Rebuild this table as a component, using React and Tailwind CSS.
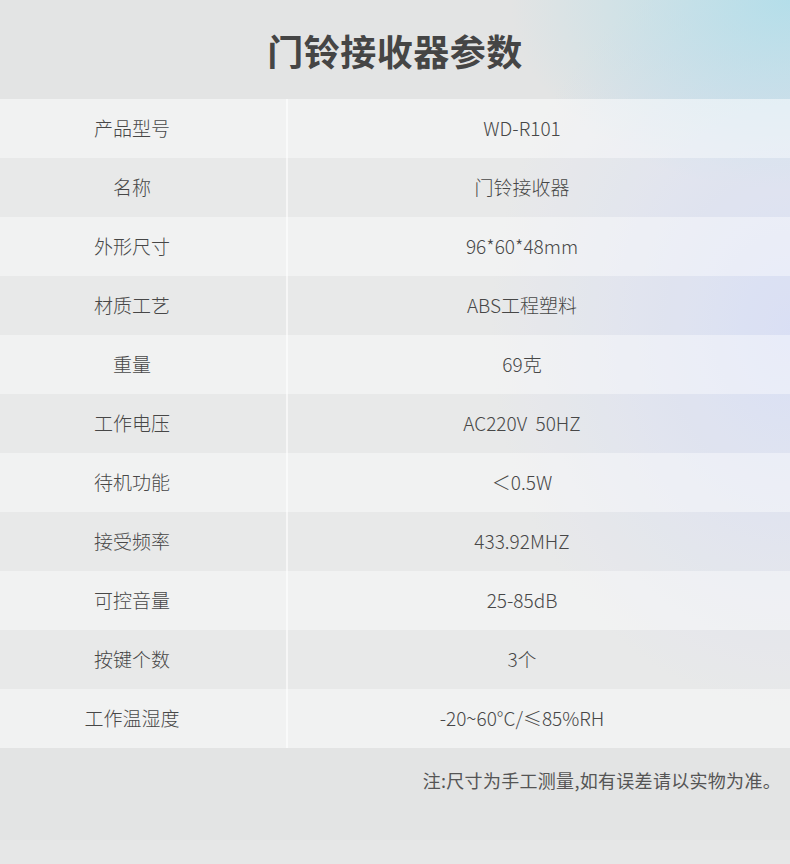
import React from 'react';

const specs = [
  ['产品型号', 'WD-R101'],
  ['名称', '门铃接收器'],
  ['外形尺寸', '96*60*48mm'],
  ['材质工艺', 'ABS工程塑料'],
  ['重量', '69克'],
  ['工作电压', 'AC220V  50HZ'],
  ['待机功能', '＜0.5W'],
  ['接受频率', '433.92MHZ'],
  ['可控音量', '25-85dB'],
  ['按键个数', '3个'],
  ['工作温湿度', '-20~60°C/≤85%RH'],
];

const SpecRow = ({ label, value, light }) => (
  <div className={`flex h-[59px] items-center ${light ? 'bg-white/50' : 'bg-white/20'}`}>
    <div className="w-[288px] h-full flex items-center justify-center pr-[22px] border-r-2 border-white/60">
      <span>{label}</span>
    </div>
    <div className="flex-1 h-full flex items-center justify-center pr-[34px] whitespace-pre">
      <span>{value}</span>
    </div>
  </div>
);

export default function App() {
  return (
    <div
      className="w-[790px] h-[864px] overflow-hidden bg-[#e3e4e4] bg-[radial-gradient(ellipse_280px_190px_at_100%_0%,rgba(178,222,234,0.95),transparent),radial-gradient(ellipse_300px_380px_at_100%_38%,rgba(205,214,245,0.85),transparent)] text-[#474747] font-['Noto_Sans_CJK_SC','Noto_Sans',sans-serif]"
    >
      <div className="h-[99px] flex items-center justify-center">
        <h1 className="text-[36px] font-bold text-[#454545] tracking-[0.5px]">门铃接收器参数</h1>
      </div>

      <div className="text-[19px] font-light">
        {specs.map(([label, value], i) => (
          <SpecRow key={label} label={label} value={value} light={i % 2 === 0} />
        ))}
      </div>

      <div className="h-[116px] flex flex-col">
        <div className="flex justify-end pr-[9px] pt-[19px] text-[18px] text-[#555] tracking-[0.3px]">
          注:尺寸为手工测量,如有误差请以实物为准。
        </div>
        <div className="mt-auto h-[24px] bg-white/10" />
      </div>
    </div>
  );
}
